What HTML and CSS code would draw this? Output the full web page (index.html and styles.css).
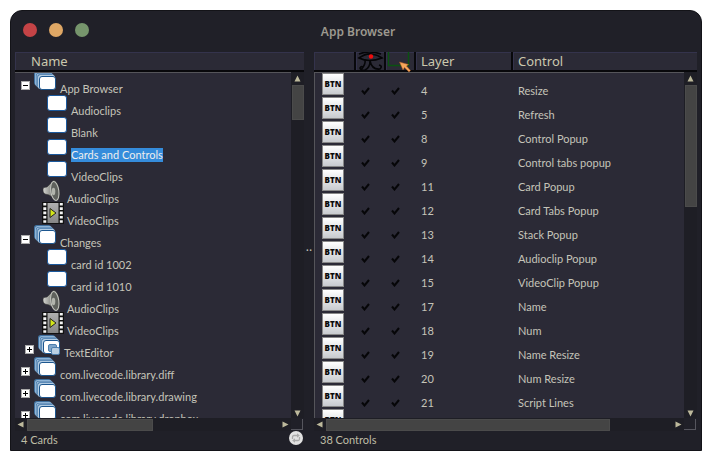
FILE: index.html
```html
<!DOCTYPE html>
<html lang="en">
<head>
<meta charset="utf-8">
<title>App Browser</title>
<link rel="stylesheet" href="styles.css">
</head>
<body>
<svg class="defs" aria-hidden="true">
  <defs>
    <linearGradient id="metal" x1="0" y1="0" x2="1" y2="0"><stop offset="0" stop-color="#d5d6d2"/><stop offset=".5" stop-color="#8a8c87"/><stop offset="1" stop-color="#4c4e4a"/></linearGradient>
    <linearGradient id="film" x1="0" y1="0" x2="0" y2="1"><stop offset="0" stop-color="#b0b0b0"/><stop offset="1" stop-color="#858585"/></linearGradient>
    <symbol id="stack" viewBox="0 0 24 22">
      <rect x="1" y="1" width="17" height="14" rx="2.500" fill="#3f709e"/>
      <rect x="2" y="2" width="17" height="14" rx="2.500" fill="#8fb4d6"/>
      <rect x="3" y="3" width="17" height="14" rx="2.500" fill="#3a6fa3"/>
      <rect x="3.500" y="3.500" width="17" height="14" rx="2.500" fill="#a4c2dd"/>
      <rect x="4.300" y="4.300" width="17" height="14" rx="2.500" fill="#4478aa"/>
      <rect x="5" y="5" width="17" height="14" rx="2.500" fill="#b4cde3"/>
      <rect x="6.500" y="6.500" width="16" height="13" rx="2.500" fill="#fff" stroke="#1c568f"/>
    </symbol>
    <symbol id="substack" viewBox="0 0 24 22">
      <use href="#stack" width="24" height="22"/>
      <rect x="11.500" y="10.500" width="8" height="7" rx="1.500" fill="#7ea6cb" stroke="#4e7fae"/>
      <rect x="14.500" y="13.500" width="8" height="7" rx="1.500" fill="#b9cfe2" stroke="#4e7fae"/>
    </symbol>
    <symbol id="card" viewBox="0 0 22 22"><rect x="1.500" y="3.500" width="19" height="15" rx="2.500" fill="#fff" stroke="#1b599d"/></symbol>
    <symbol id="speaker" viewBox="0 0 22 22">
      <path d="M1 9q0-2 4-2l6-6c2-2 6 3 6.500 10s-1 11-3.500 10c-2-1-4-5-7-6l-4-1c-2-1-2-3-2-5z" fill="url(#metal)" stroke="#333" stroke-width=".6"/>
      <ellipse cx="12.800" cy="11" rx="4" ry="9.500" transform="rotate(-8 12.800 11)" fill="#5f625d" stroke="#c5c7c0"/>
      <ellipse cx="11.500" cy="11.500" rx="1.800" ry="3.800" fill="#b2b5ad"/>
    </symbol>
    <symbol id="movie" viewBox="0 0 24 22">
      <rect x="1" width="22" height="22" fill="#111"/>
      <rect x="6.500" y="1" width="11" height="20" fill="url(#film)"/>
      <path d="M3.800 1v20M20.300 1v20" stroke="#f4f4f4" stroke-width="3" stroke-dasharray="2.600 1.700"/>
      <path d="M9 6.500v9l6-4.500z" fill="#d3e519" stroke="#222"/>
    </symbol>
    <symbol id="check" viewBox="0 0 9 9"><path d="M1 4.500l2.500 3L8 2" fill="none" stroke="#060608" stroke-width="2"/></symbol>
    <symbol id="arrow" viewBox="0 0 7 7"><path d="M3.500.5L6.500 6.500H.5z" fill="#bdb99c"/></symbol>
  </defs>
</svg>
<main class="window">
  <header class="titlebar">
    <div class="lights">
      <button class="light red" aria-label="Close"></button>
      <button class="light amber" aria-label="Minimize"></button>
      <button class="light green" aria-label="Zoom"></button>
    </div>
    <h1>App Browser</h1>
  </header>
  <div class="panes">
    <section class="pane left">
      <div class="head name-head">Name</div>
      <div class="viewport">
        <ul class="tree">
          <li><button class="toggle" aria-label="Collapse"></button><svg class="stack"><use href="#stack"/></svg><span>App Browser</span></li>
          <li class="child"><svg class="card"><use href="#card"/></svg><span>Audioclips</span></li>
          <li class="child"><svg class="card"><use href="#card"/></svg><span>Blank</span></li>
          <li class="child"><svg class="card"><use href="#card"/></svg><span class="selected">Cards and Controls</span></li>
          <li class="child"><svg class="card"><use href="#card"/></svg><span>VideoClips</span></li>
          <li class="media"><svg class="stack"><use href="#speaker"/></svg><span>AudioClips</span></li>
          <li class="media"><svg class="stack"><use href="#movie"/></svg><span>VideoClips</span></li>
          <li><button class="toggle" aria-label="Collapse"></button><svg class="stack"><use href="#stack"/></svg><span>Changes</span></li>
          <li class="child"><svg class="card"><use href="#card"/></svg><span>card id 1002</span></li>
          <li class="child"><svg class="card"><use href="#card"/></svg><span>card id 1010</span></li>
          <li class="media"><svg class="stack"><use href="#speaker"/></svg><span>AudioClips</span></li>
          <li class="media"><svg class="stack"><use href="#movie"/></svg><span>VideoClips</span></li>
          <li class="sub"><button class="toggle plus" aria-label="Expand"></button><svg class="stack"><use href="#substack"/></svg><span>TextEditor</span></li>
          <li><button class="toggle plus" aria-label="Expand"></button><svg class="stack"><use href="#stack"/></svg><span>com.livecode.library.diff</span></li>
          <li><button class="toggle plus" aria-label="Expand"></button><svg class="stack"><use href="#stack"/></svg><span>com.livecode.library.drawing</span></li>
          <li><button class="toggle plus" aria-label="Expand"></button><svg class="stack"><use href="#stack"/></svg><span>com.livecode.library.dropbox</span></li>
        </ul>
      </div>
      <div class="vbar"><svg class="arrow"><use href="#arrow"/></svg><div class="track"><div class="thumb short"></div></div><svg class="arrow down"><use href="#arrow"/></svg></div>
      <div class="hbar"><svg class="arrow back"><use href="#arrow"/></svg><div class="track"><div class="thumb half"></div></div><svg class="arrow next"><use href="#arrow"/></svg></div>
      <div class="corner"></div>
      <footer class="status"><span>4 Cards</span>
        <button class="refresh" aria-label="Refresh"><svg viewBox="0 0 14 14"><circle cx="7" cy="7" r="7" fill="#e2e2e2"/><path d="M3.500 8V6Q3.500 4.500 5 4.500H8.500M10.500 6v2Q10.500 9.500 9 9.500H5.500" fill="none" stroke="#aaa" stroke-width="1.300"/><path d="M8 2.300l2.800 2.200L8 6.700zM6 7.300L3.200 9.500 6 11.700z" fill="#aaa"/></svg></button>
      </footer>
    </section>
    <div class="splitter">··</div>
    <section class="pane right">
      <table>
        <thead><tr>
          <th class="head" aria-label="Kind"></th>
          <th class="head icon" aria-label="Visible"><svg viewBox="0 0 28 20"><g fill="none" stroke="#050507" stroke-width="1.600"><path d="M3 2Q13-2 25 2"/><path d="M3 6Q10 1 16 2T26 6Q13 11 3 6z"/><path d="M9 8Q10 12 5 18M14 9Q14 16 9 18Q5 19 4 16Q5 14 7 15M14 9Q16 18 24 17Q27 14 23 13"/></g><circle cx="15" cy="4.500" r="2.200" fill="#f00c0c"/></svg></th>
          <th class="head icon" aria-label="Selectable"><svg viewBox="0 0 28 20"><path d="M2.500 0v13.500h20V0" fill="none" stroke="#0a5210" stroke-width="1.400"/><path d="M13.500 10l9 2.500-2 1.500 4 4.500-1.500 1.500-4.500-4.500-1.500 2.500z" fill="#f6a55a" stroke="#a85b22" stroke-width=".5"/></svg></th>
          <th class="head">Layer</th>
          <th class="head">Control</th>
        </tr></thead>
        <tbody id="rows"></tbody>
      </table>
      <div class="vbar"><svg class="arrow"><use href="#arrow"/></svg><div class="track"><div class="thumb tall"></div></div><svg class="arrow down"><use href="#arrow"/></svg></div>
      <div class="hbar"><svg class="arrow back"><use href="#arrow"/></svg><div class="track"><div class="thumb wide"></div></div><svg class="arrow next"><use href="#arrow"/></svg></div>
      <div class="corner"></div>
      <footer class="status"><span>38 Controls</span></footer>
    </section>
  </div>
</main>
<script src="rows.js"></script>
</body>
</html>
```
FILE: styles.css
```css
* { box-sizing: border-box; }
body {
  margin: 0;
  padding: 10px;
  height: 100vh;
  background: #fff;
  color: #c5c4b9;
  font: 11px/12px Lato, sans-serif;
}
.defs { position: absolute; width: 0; height: 0; }
button { padding: 0; border: 0; font: inherit; }
svg { display: block; }
.window {
  display: flex;
  flex-direction: column;
  height: 100%;
  overflow: hidden;
  background: #202028;
  border: 1px solid #131318;
  border-radius: 12px 12px 0 0;
}
.titlebar {
  display: grid;
  grid-template-columns: 1fr auto 1fr;
  align-items: center;
  height: 41px;
  flex: none;
  padding: 0 8px 0 12px;
}
.titlebar h1 { margin: 0; font: 600 12px/16px "Noto Sans", sans-serif; color: #9c998f; }
.lights { display: flex; gap: 12px; padding-bottom: 4px; }
.light { width: 14px; height: 14px; border-radius: 50%; }
.red { background: #c44346; }
.amber { background: #dfa765; }
.green { background: #76956c; }
.panes {
  flex: 1;
  min-height: 0;
  display: grid;
  grid-template-columns: 289fr 10px 383fr;
  padding: 0 4px;
}
.pane {
  display: grid;
  min-width: 0;
  min-height: 0;
  grid-template-columns: minmax(0, 1fr) 13px;
  grid-template-rows: 20px minmax(0, 1fr) 13px 19px;
}
.head {
  height: 20px;
  padding: 0 5px;
  background: #2b2a36;
  border: solid #08080b;
  border-width: 0 0 2px;
  box-shadow: inset 1px 1px #34334c;
  font: 400 13px/18px "Noto Sans", sans-serif;
  text-align: left;
  color: #cbc8ae;
}
.name-head { grid-column: 1 / 3; padding-left: 16px; }
.viewport, tbody {
  overflow: hidden;
  background: #2b2a36;
  border-top: 1px solid #55555a;
}
.tree { list-style: none; margin: -3px 0 0; padding: 0; }
.tree li { display: flex; height: 22px; padding-left: 6px; white-space: nowrap; }
.tree span { align-self: flex-start; margin-top: 13px; }
.tree .child { padding-left: 31px; }
.tree .media { padding-left: 26px; }
.tree .sub { padding-left: 10px; }
.stack { width: 24px; height: 22px; flex: none; margin-right: 2px; }
.toggle + .stack { margin: 0 3px; }
.card { width: 22px; height: 22px; flex: none; margin-right: 3px; }
.toggle {
  flex: none;
  width: 9px;
  height: 9px;
  margin-top: 11px;
  background: linear-gradient(#000, #000) center / 5px 1px no-repeat, #fff;
  border: 1px solid #aaa;
}
.plus { background: linear-gradient(#000, #000) center / 5px 1px no-repeat, linear-gradient(#000, #000) center / 1px 5px no-repeat, #fff; }
.tree .selected { margin-top: 12px; line-height: 14px; background: #358cdb; color: #eee; }
.vbar { display: flex; flex-direction: column; align-items: center; background: #1e1e25; padding: 3px 0 1px; }
.vbar .track { flex: 1; width: 12px; margin: 3px 0; }
.hbar { display: flex; align-items: center; background: #1e1e25; padding: 0 2px; }
.hbar .track { flex: 1; height: 12px; margin: 0 3px; }
.thumb { background: #444; border: 1px solid #4b4b4b; height: 100%; }
.short { height: 11%; }
.tall { height: 38%; }
.half { width: 50%; }
.wide { width: 82%; }
.arrow { width: 7px; height: 7px; flex: none; }
.down { transform: rotate(180deg); }
.back { transform: rotate(-90deg); }
.next { transform: rotate(90deg); }
.corner { border: solid #55555d; border-width: 0 1px 1px 0; margin: 1px 1px 1px 0; }
.status {
  grid-column: 1 / 3;
  display: flex;
  justify-content: space-between;
  padding: 3px 1px 0 6px;
  color: #bfbda6;
}
.refresh { width: 14px; height: 14px; margin-top: -3px; background: none; }
.splitter { place-self: center; font: 12px/12px "Noto Sans", sans-serif; }
table, .right thead { display: contents; }
thead tr, tbody tr {
  display: grid;
  grid-template-columns: 40px 28px 28px 95px minmax(0, 1fr);
  column-gap: 2px;
}
thead tr { grid-column: 1 / 3; background: #08080b; }
th.icon { padding: 0; }
.icon svg { width: 28px; height: 20px; }
tbody { display: block; border-left: 1px solid #55555a; }
tbody tr { height: 24px; }
tbody tr:first-child { margin-top: -2px; }
td { padding: 14px 0 0 4px; white-space: nowrap; }
td.kind { padding: 2px 0 0 7px; }
td.tick { padding: 15px 0 0 4px; }
.tick svg { width: 9px; height: 9px; }
.btn {
  display: block;
  width: 22px;
  height: 22px;
  background: linear-gradient(#fff, #c8cbcf);
  border: 1px solid #888;
  color: #0a0a0c;
  font: 800 8px/20px "Open Sans", sans-serif;
  text-align: center;
}
```
FILE: rows.js
```js
const controls = [
  [4, "Resize"], [5, "Refresh"], [8, "Control Popup"], [9, "Control tabs popup"],
  [11, "Card Popup"], [12, "Card Tabs Popup"], [13, "Stack Popup"],
  [14, "Audioclip Popup"], [15, "VideoClip Popup"], [17, "Name"], [18, "Num"],
  [19, "Name Resize"], [20, "Num Resize"], [21, "Script Lines"], ["", ""]
];
const tick = '<td class="tick"><svg role="img" aria-label="yes"><use href="#check"/></svg></td>';
document.getElementById("rows").innerHTML = controls.map(([layer, name]) =>
  `<tr><td class="kind"><span class="btn">BTN</span></td>${tick}${tick}<td>${layer}</td><td>${name}</td></tr>`
).join("");
```
